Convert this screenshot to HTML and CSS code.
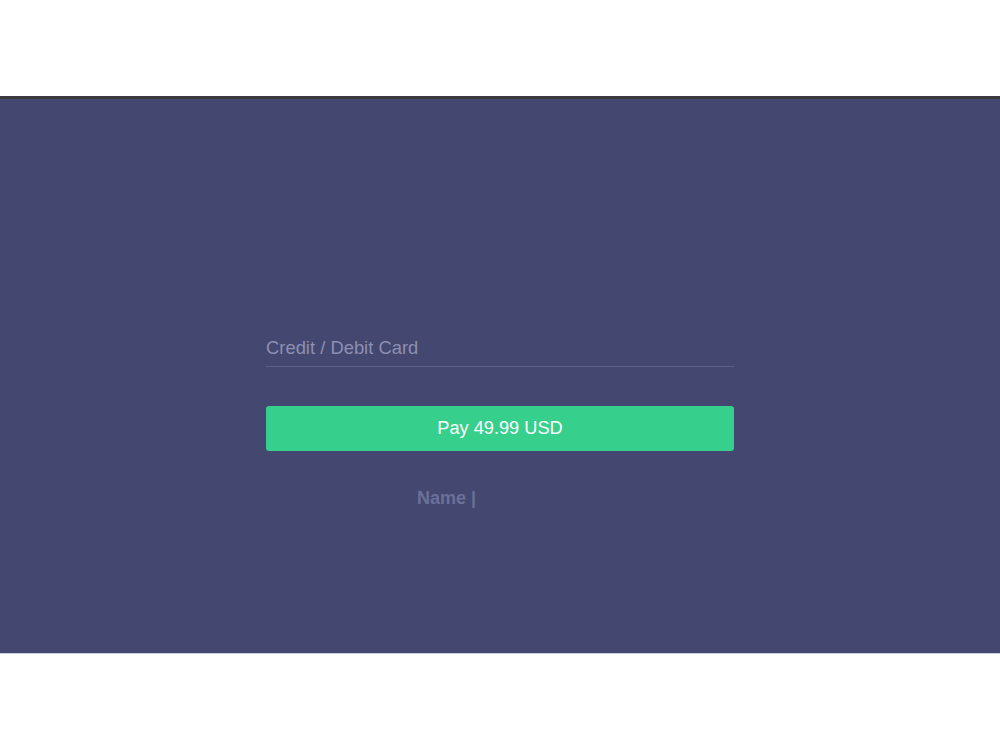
FILE: index.html
```html
<!DOCTYPE html>
<html>
<head>
<meta charset="utf-8">
<link rel="stylesheet" href="styles.css">
</head>
<body>
<div class="top"></div>
<section class="pay">
  <div class="form">
    <div class="field">Credit / Debit Card</div>
    <button class="btn">Pay 49.99 USD</button>
    <div class="name">Name |</div>
  </div>
</section>
</body>
</html>
```
FILE: styles.css
```css
html, body { margin: 0; padding: 0; background: #fff; }
body { font-family: "Liberation Sans", Arial, sans-serif; }
.top { height: 96px; }
.pay {
  border-top: 3px solid #3a3a3c;
  background: #44476f;
  height: 558px;
  border-bottom: 1px solid #c9cbe0;
  box-sizing: border-box;
  display: flex;
  justify-content: center;
}
.form { width: 468px; padding-top: 238px; }
.field {
  color: #8b90b4;
  font-size: 18.4px;
  line-height: 22px;
  padding-bottom: 7px;
  border-bottom: 1px solid #5d6188;
}
.btn {
  display: block;
  width: 100%;
  margin-top: 39px;
  height: 45px;
  border: 0;
  border-radius: 3px;
  background: #36cf8b;
  color: #fff;
  font-family: "Liberation Sans", Arial, sans-serif;
  font-size: 18.2px;
}
.name {
  margin-top: 37px;
  padding-left: 151px;
  color: #6b7099;
  font-weight: bold;
  font-size: 18px;
}
```
